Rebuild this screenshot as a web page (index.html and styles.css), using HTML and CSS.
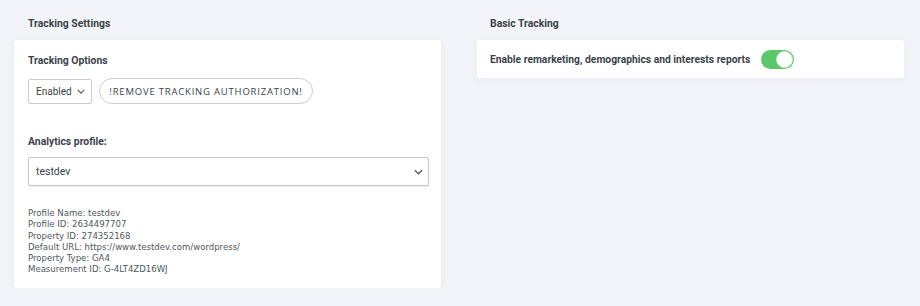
FILE: index.html
```html
<!DOCTYPE html>
<html lang="en">
<head>
    <meta charset="UTF-8">
    <meta name="viewport" content="width=device-width, initial-scale=1.0">
    <title>Tracking Settings</title>
    <link rel="stylesheet" href="styles.css">
</head>
<body>
    <div class="columns">
        <section class="column">
            <h2 class="section-title">Tracking Settings</h2>
            <div class="card card-tracking">
                <h3 class="field-title">Tracking Options</h3>
                <div class="option-row">
                    <div class="select select-small">
                        <span>Enabled</span>
                        <svg class="chevron" viewBox="0 0 10 6" width="8" height="5"><path d="M1 1l4 4 4-4" fill="none" stroke="#555" stroke-width="1.4"/></svg>
                    </div>
                    <button class="pill-button">!REMOVE TRACKING AUTHORIZATION!</button>
                </div>

                <h3 class="field-title profile-title">Analytics profile:</h3>
                <div class="select select-wide">
                    <span>testdev</span>
                    <svg class="chevron" viewBox="0 0 10 6" width="9" height="6"><path d="M1 1l4 4 4-4" fill="none" stroke="#555" stroke-width="1.4"/></svg>
                </div>

                <div class="profile-info">
                    <div>Profile Name: testdev</div>
                    <div>Profile ID: 2634497707</div>
                    <div>Property ID: 274352168</div>
                    <div>Default URL: https://www.testdev.com/wordpress/</div>
                    <div>Property Type: GA4</div>
                    <div>Measurement ID: G-4LT4ZD16WJ</div>
                </div>
            </div>
        </section>

        <section class="column">
            <h2 class="section-title">Basic Tracking</h2>
            <div class="card card-basic">
                <span class="toggle-label">Enable remarketing, demographics and interests reports</span>
                <span class="toggle on"><span class="knob"></span></span>
            </div>
        </section>
    </div>
</body>
</html>
```

FILE: styles.css
```css
body {
    margin: 0;
    padding: 0;
    background-color: #f2f4f9;
    font-family: Roboto, "Noto Sans", sans-serif;
    color: #3c434a;
}

.columns {
    display: grid;
    grid-template-columns: 427px 427px;
    column-gap: 36px;
    padding: 0 14px;
}

.section-title {
    margin: 0;
    padding: 17px 14px 0;
    height: 23px;
    font-size: 10.4px;
    font-weight: 700;
    color: #3c434a;
}

.column + .column .section-title {
    padding-left: 13px;
}

.card {
    background: white;
    border-radius: 3px;
    box-shadow: 0 2px 10px rgba(40, 60, 100, 0.05);
}

.card-tracking {
    padding: 14px 13px 14px 14px;
    height: 220px;
}

.field-title {
    margin: 0;
    font-size: 10.4px;
    font-weight: 700;
    color: #3c434a;
    line-height: 13px;
}

.option-row {
    display: flex;
    align-items: center;
    gap: 7px;
    margin-top: 11px;
}

.select {
    display: flex;
    align-items: center;
    justify-content: space-between;
    box-sizing: border-box;
    background: white;
    border: 1px solid #c8cbd0;
    border-radius: 2px;
    font-size: 10.5px;
    color: #3c434a;
}

.select-small {
    width: 64px;
    height: 25px;
    padding: 0 6px 0 7px;
    font-size: 10px;
}

.select-wide {
    width: 401px;
    height: 29px;
    padding: 0 5px 0 7px;
    margin-top: 9px;
    border-color: #c4c6ca;
    box-shadow: 0 1px 1px rgba(0, 0, 0, 0.08);
}

.pill-button {
    height: 26px;
    width: 214px;
    padding: 0;
    background: white;
    border: 1px solid #c9ced6;
    border-radius: 13px;
    font-family: "Open Sans", sans-serif;
    font-size: 9.5px;
    letter-spacing: 0.8px;
    color: #3c434a;
    cursor: pointer;
}

.profile-title {
    margin-top: 31px;
}

.profile-info {
    margin-top: 21px;
    font-family: "DejaVu Sans Condensed", "DejaVu Sans", sans-serif;
    font-size: 9.5px;
    line-height: 11.3px;
    color: #50575e;
}

.card-basic {
    display: flex;
    align-items: center;
    gap: 11px;
    height: 38px;
    padding: 0 13px;
}

.toggle-label {
    font-size: 10.3px;
    font-weight: 700;
    color: #3c434a;
}

.toggle {
    position: relative;
    width: 33px;
    height: 19px;
    border-radius: 10px;
    background: #5bc76b;
}

.knob {
    position: absolute;
    top: 1px;
    right: 1px;
    width: 17px;
    height: 17px;
    box-sizing: border-box;
    border-radius: 50%;
    background: white;
    border: 1px solid #cfeed3;
}
```
